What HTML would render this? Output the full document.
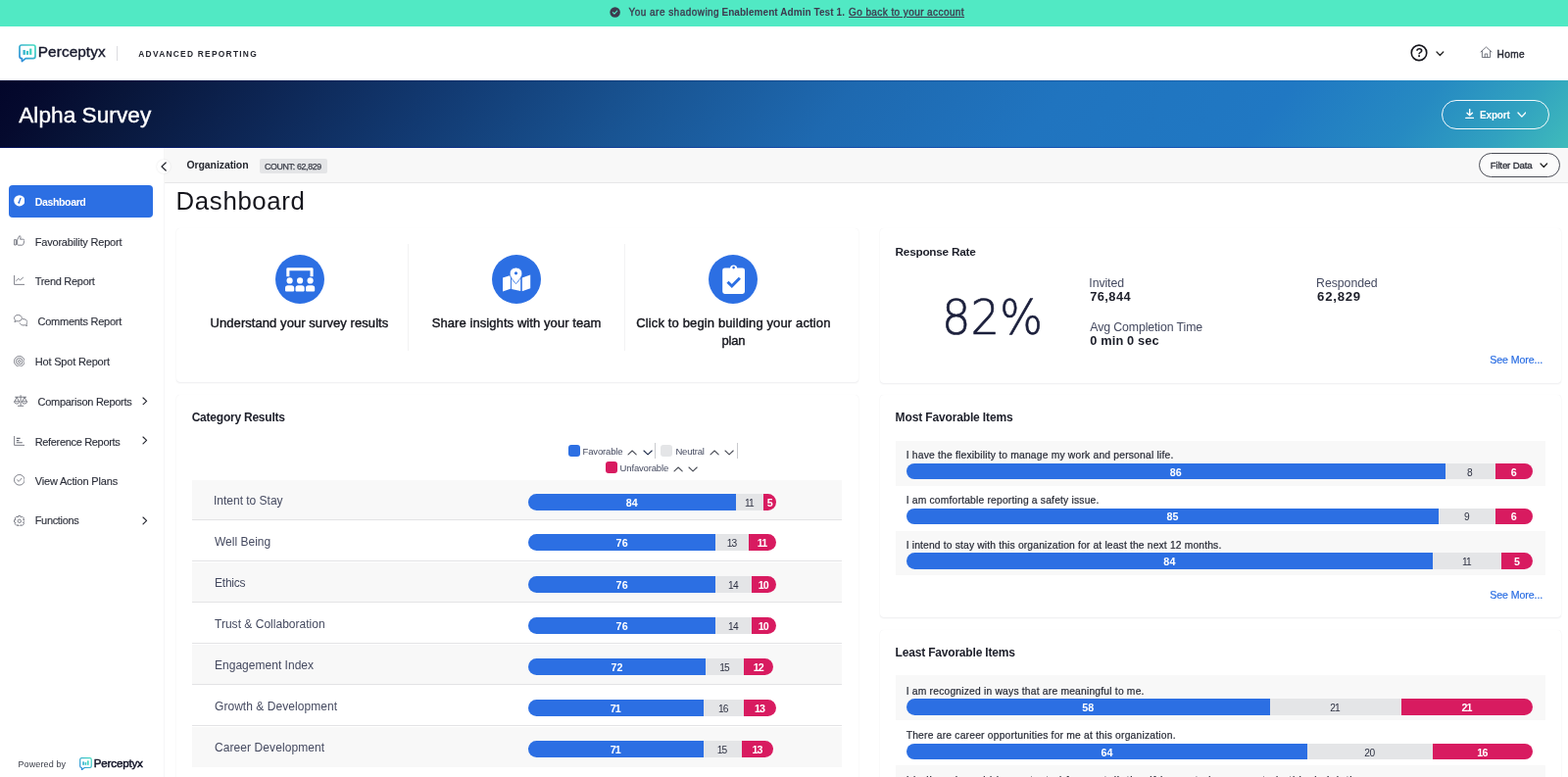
<!DOCTYPE html><html lang="en"><head><meta charset="utf-8"><title>Alpha Survey - Dashboard</title><style>
*{box-sizing:border-box;margin:0;padding:0}
html,body{width:1600px;height:793px;overflow:hidden;background:#fff}
body{position:relative;font-family:'Liberation Sans',Arial,sans-serif;color:#30343f;will-change:transform}
.a,.t,svg.i{position:absolute}
.t{white-space:pre;display:block;font-weight:400;margin:0}
a.t{text-decoration:underline}
.topbar{left:0;top:0;width:1600px;height:27px;background:#51e9c4}
.hdr{left:0;top:27px;width:1600px;height:55px;background:#fff}
.banner{left:0;top:82px;width:1600px;height:69px;background:linear-gradient(128deg,#03062a 0%,#050a2e 3%,#081539 8%,#0d2553 17%,#123a72 28%,#195594 41%,#1e69b0 53%,#2074bf 66%,#2078c3 80%,#268ac2 89%,#31a1c0 95%,#3fbbbb 100%);}
.bline{left:0;top:150px;width:1600px;height:1px;background:linear-gradient(90deg,rgba(0,25,150,.42) 0%,rgba(0,30,160,.4) 82%,rgba(0,30,160,0) 93%)}
.tline{left:0;top:82px;width:1600px;height:1px;background:linear-gradient(90deg,rgba(0,10,80,.3) 0%,rgba(0,10,80,.25) 70%,rgba(0,10,80,0) 90%)}
.side{left:0;top:151px;width:168px;height:642px;background:#fff;border-right:1px solid #f6f6f7}
.crumb{left:168px;top:151px;width:1432px;height:36px;background:#f8f8f8;border-bottom:1px solid #e7e7e8}
.card{background:#fff;border-radius:4px;box-shadow:0 1px 2px rgba(20,20,40,.07),0 0 1px rgba(20,20,40,.07)}
.pill{border-radius:999px}
.bar{display:flex;overflow:hidden;border-radius:999px}
.bar i{display:block;height:100%}
.row{background:#f8f8f8}
.ln{background:#e3e3e5;height:1px}
.vl{background:#f2f2f3;width:1px}
.navon{left:9px;top:189px;width:147px;height:33px;background:#2c6fe3;border-radius:4px}
.circ{width:50px;height:50px;border-radius:50%;background:#2c6fe3}
</style></head><body>
<header>
<div class="a topbar"></div>
<svg class="i" style="left:622px;top:7px" width="11" height="11" viewBox="0 0 11 11" fill="none" ><circle cx="5.6" cy="5.5" r="5.25" fill="#3d3a4e"/><path d="M3.4 5.7 L4.9 7.1 L7.7 4.1" stroke="#51e9c4" stroke-width="1.15" stroke-linecap="round" stroke-linejoin="round"/></svg>
<span class="t" style="left:641.6px;top:8.3px;font-size:10px;line-height:10px;color:#3d3a4e;letter-spacing:0.46px;-webkit-text-stroke:0.35px #3d3a4e;">You are shadowing</span>
<span class="t" style="left:736.4px;top:8.3px;font-size:10px;line-height:10px;font-weight:700;color:#3d3a4e;letter-spacing:0.07px;">Enablement Admin Test 1.</span>
<a class="t" style="left:866px;top:8.3px;font-size:10px;line-height:10px;color:#3d3a4e;letter-spacing:0.42px;text-decoration:underline;-webkit-text-stroke:0.35px #3d3a4e;">Go back to your account</a>
<div class="a hdr"></div>
<svg class="i" style="left:18.6px;top:45px" width="18.0" height="18.6" viewBox="0 0 18 18.6" fill="none" ><defs><linearGradient id="lga" x1="1" y1="0" x2="0" y2="1"><stop offset="0" stop-color="#45dcc0"/><stop offset="1" stop-color="#2a86db"/></linearGradient></defs><path d="M3 1 H15 A2 2 0 0 1 17 3 V12.6 A2 2 0 0 1 15 14.6 H7.2 L3.4 17.6 V14.6 H3 A2 2 0 0 1 1 12.6 V3 A2 2 0 0 1 3 1 Z" stroke="url(#lga)" stroke-width="1.7" stroke-linejoin="round"/><rect x="4.5" y="6" width="2.3" height="4.9" fill="#35b3cd"/><rect x="7.8" y="7" width="2.3" height="3.9" fill="#3cc3c8"/><rect x="11.1" y="4.6" width="2.3" height="6.3" fill="#44d6c2"/></svg>
<span class="t" style="left:38.8px;top:45.1px;font-size:15.4px;line-height:15.4px;color:#16182b;letter-spacing:0.05px;-webkit-text-stroke:0.35px #16182b;">Perceptyx</span>
<div class="a vl" style="left:118.5px;top:47px;width:1px;height:15px;background:#dcdcdf;"></div>
<span class="t" style="left:141.3px;top:51.0px;font-size:8.4px;line-height:8.4px;font-weight:700;color:#25272f;letter-spacing:1.26px;">ADVANCED REPORTING</span>
<svg class="i" style="left:1439px;top:45px" width="18" height="18" viewBox="0 0 18 18" fill="none" ><circle cx="9" cy="8.9" r="7.75" stroke="#16161d" stroke-width="1.6"/></svg>
<span class="t" style="left:1444.5px;top:48.3px;font-size:12.6px;line-height:12.6px;font-weight:700;color:#16161d;letter-spacing:0px;">?</span>
<svg class="i" style="left:1465.3px;top:52.15px" width="8.8" height="5.5" viewBox="-1 -1 8.8 5.5" fill="none" ><path d="M0 0 L3.4 3.5 L6.8 0" stroke="#222" stroke-width="1.25" stroke-linecap="round" stroke-linejoin="round"/></svg>
<svg class="i" style="left:1510.1px;top:47.3px" width="13" height="12.5" viewBox="0 0 13 12.5" fill="none" ><path d="M1 6 L6.5 1 L12 6 M2.4 5 V11.6 H10.6 V5 M5.2 11.6 V8 H7.8 V11.6" stroke="#62656f" stroke-width="0.9" stroke-linejoin="round" stroke-linecap="round"/></svg>
<span class="t" style="left:1527.6px;top:50.71px;font-size:10.1px;line-height:10.1px;color:#2a2c36;letter-spacing:0.36px;-webkit-text-stroke:0.4px #2a2c36;">Home</span>
</header>
<section>
<div class="a banner"></div>
<div class="a tline"></div>
<div class="a bline"></div>
<h1 class="t" style="left:19.2px;top:106.61px;font-size:22.6px;line-height:22.6px;color:#fff;letter-spacing:0.06px;-webkit-text-stroke:0.4px #fff;">Alpha Survey</h1>
<div class="a pill" style="left:1471px;top:101.7px;width:109.5px;height:30px;border:1.4px solid rgba(255,255,255,.95);"></div>
<svg class="i" style="left:1494.5px;top:111px" width="9.4" height="10.4" viewBox="0 0 9.4 10.4" fill="none" ><path d="M4.7 0.6 V6.6 M2 4.2 L4.7 6.8 L7.4 4.2 M0.8 9.5 H8.6" stroke="#fff" stroke-width="1.4" stroke-linecap="round" stroke-linejoin="round"/></svg>
<span class="t" style="left:1510px;top:112.71px;font-size:10px;line-height:10px;font-weight:700;color:#fff;letter-spacing:-0.17px;">Export</span>
<svg class="i" style="left:1547.6px;top:113.75px" width="9.8" height="6.1" viewBox="-1 -1 9.8 6.1" fill="none" ><path d="M0 0 L3.9 4.1 L7.8 0" stroke="#fff" stroke-width="1.35" stroke-linecap="round" stroke-linejoin="round"/></svg>
</section>
<nav>
<div class="a side"></div>
<div class="a navon"></div>
<svg class="i" style="left:13.5px;top:199.4px" width="11.6" height="11.6" viewBox="0 0 11.6 11.6" fill="none" ><circle cx="5.8" cy="5.8" r="5.6" fill="#fff"/><path d="M5.4 7.6 L7 3.3" stroke="#2c6fe3" stroke-width="1.3" stroke-linecap="round"/><circle cx="5.3" cy="7.7" r="1" fill="#2c6fe3"/></svg>
<span class="t" style="left:35.7px;top:201.01px;font-size:10.6px;line-height:10.6px;font-weight:700;color:#fff;letter-spacing:-0.4px;">Dashboard</span>
<svg class="i" style="left:13.5px;top:240.2px" width="11.5" height="11" viewBox="0 0 11.5 11" fill="none" ><path d="M0.6 4.6 H2.4 V10 H0.6 Z M3.6 9.6 V4.9 L5.7 0.8 C6.8 0.7 7.3 1.6 7 2.6 L6.6 4.2 H9.6 C10.6 4.2 11 5 10.8 5.8 L9.9 9.2 C9.7 9.9 9.2 10.2 8.6 10.2 H4.6 Z" stroke="#696c76" stroke-width="0.85" stroke-linejoin="round"/></svg>
<span class="t" style="left:35.7px;top:241.6px;font-size:11px;line-height:11px;color:#2b2e39;letter-spacing:-0.19px;-webkit-text-stroke:0.12px #2b2e39;">Favorability Report</span>
<svg class="i" style="left:13.5px;top:281.2px" width="11.6" height="10.2" viewBox="0 0 11.6 10.2" fill="none" ><path d="M0.6 0.4 V9.4 H11.2" stroke="#696c76" stroke-width="0.85" stroke-linecap="round" stroke-linejoin="round"/><path d="M2.6 5.6 L4.8 3.4 L6.6 4.8 L9.6 2.2" stroke="#696c76" stroke-width="0.85" stroke-linecap="round" stroke-linejoin="round"/></svg>
<span class="t" style="left:35.7px;top:282.21px;font-size:11px;line-height:11px;color:#2b2e39;letter-spacing:-0.29px;-webkit-text-stroke:0.12px #2b2e39;">Trend Report</span>
<svg class="i" style="left:13.5px;top:320.6px" width="14.6" height="12.4" viewBox="0 0 14.6 12.4" fill="none" ><path d="M4.4 0.5 C6.7 0.5 8.3 1.9 8.3 3.7 C8.3 5.5 6.7 6.9 4.4 6.9 C3.9 6.9 3.4 6.8 3 6.7 L0.9 7.6 L1.5 5.8 C0.9 5.2 0.5 4.5 0.5 3.7 C0.5 1.9 2.1 0.5 4.4 0.5 Z" stroke="#696c76" stroke-width="0.85" stroke-linejoin="round"/><path d="M9.3 4.6 C11.8 4.4 13.9 5.8 13.9 7.8 C13.9 8.6 13.5 9.3 12.9 9.9 L13.5 11.7 L11.4 10.8 C10.9 10.9 10.5 11 10 11 C8.2 11 6.7 10.1 6.2 8.8" stroke="#696c76" stroke-width="0.85" stroke-linejoin="round" stroke-linecap="round"/></svg>
<span class="t" style="left:38.5px;top:323.0px;font-size:11px;line-height:11px;color:#2b2e39;letter-spacing:-0.25px;-webkit-text-stroke:0.12px #2b2e39;">Comments Report</span>
<svg class="i" style="left:13.5px;top:362.5px" width="11.6" height="11.6" viewBox="0 0 11.6 11.6" fill="none" ><circle cx="5.8" cy="5.8" r="5.3" stroke="#696c76" stroke-width="0.85"/><circle cx="5.8" cy="5.8" r="3.3" stroke="#696c76" stroke-width="0.85"/><circle cx="5.8" cy="5.8" r="1.3" stroke="#696c76" stroke-width="0.85"/></svg>
<span class="t" style="left:35.7px;top:364.3px;font-size:11px;line-height:11px;color:#2b2e39;letter-spacing:-0.18px;-webkit-text-stroke:0.12px #2b2e39;">Hot Spot Report</span>
<svg class="i" style="left:13.5px;top:403px" width="14.2" height="12" viewBox="0 0 14.2 12" fill="none" ><path d="M7.1 0.6 V10.8 M4.4 11.3 H9.8 M1.6 2.2 H12.6 M3.2 2.4 L0.9 6.8 M3.2 2.4 L5.5 6.8 M11 2.4 L8.7 6.8 M11 2.4 L13.3 6.8" stroke="#696c76" stroke-width="0.85" stroke-linecap="round"/><path d="M0.6 6.8 H5.8 C5.8 8.3 4.6 9 3.2 9 C1.8 9 0.6 8.3 0.6 6.8 Z M8.4 6.8 H13.6 C13.6 8.3 12.4 9 11 9 C9.6 9 8.4 8.3 8.4 6.8 Z" stroke="#696c76" stroke-width="0.85" stroke-linejoin="round"/></svg>
<span class="t" style="left:38.5px;top:405.0px;font-size:11px;line-height:11px;color:#2b2e39;letter-spacing:-0.27px;-webkit-text-stroke:0.12px #2b2e39;">Comparison Reports</span>
<svg class="i" style="left:145.3px;top:404.5px" width="5.6" height="8.8" viewBox="-1 -1 5.6 8.8" fill="none" ><path d="M0 0 L3.6 3.4 L0 6.8" stroke="#23252e" stroke-width="1.15" stroke-linecap="round" stroke-linejoin="round"/></svg>
<svg class="i" style="left:13.5px;top:444.6px" width="11.6" height="10.2" viewBox="0 0 11.6 10.2" fill="none" ><path d="M0.6 0.4 V9.4 H11.2" stroke="#696c76" stroke-width="0.85" stroke-linecap="round" stroke-linejoin="round"/><path d="M2.8 2.4 H6.6 M2.8 4.6 H5.4 M2.8 6.8 H8.8" stroke="#696c76" stroke-width="1.1"/></svg>
<span class="t" style="left:35.7px;top:445.6px;font-size:11px;line-height:11px;color:#2b2e39;letter-spacing:-0.33px;-webkit-text-stroke:0.12px #2b2e39;">Reference Reports</span>
<svg class="i" style="left:145.3px;top:445.1px" width="5.6" height="8.8" viewBox="-1 -1 5.6 8.8" fill="none" ><path d="M0 0 L3.6 3.4 L0 6.8" stroke="#23252e" stroke-width="1.15" stroke-linecap="round" stroke-linejoin="round"/></svg>
<svg class="i" style="left:13.5px;top:484.4px" width="11.6" height="11.6" viewBox="0 0 11.6 11.6" fill="none" ><circle cx="5.8" cy="5.8" r="5.3" stroke="#696c76" stroke-width="0.85"/><path d="M3.6 5.9 L5.2 7.4 L8 4.3" stroke="#696c76" stroke-width="0.85" stroke-linecap="round" stroke-linejoin="round"/></svg>
<span class="t" style="left:35.7px;top:486.0px;font-size:11px;line-height:11px;color:#2b2e39;letter-spacing:-0.17px;-webkit-text-stroke:0.12px #2b2e39;">View Action Plans</span>
<svg class="i" style="left:13.5px;top:525.8px" width="11.6" height="11.6" viewBox="0 0 11.6 11.6" fill="none" ><g transform="translate(5.8 5.8)"><path d="M-1.1 -5.3 H1.1 L1.5 -3.8 L2.9 -4.6 L4.6 -2.9 L3.8 -1.5 L5.3 -1.1 V1.1 L3.8 1.5 L4.6 2.9 L2.9 4.6 L1.5 3.8 L1.1 5.3 H-1.1 L-1.5 3.8 L-2.9 4.6 L-4.6 2.9 L-3.8 1.5 L-5.3 1.1 V-1.1 L-3.8 -1.5 L-4.6 -2.9 L-2.9 -4.6 L-1.5 -3.8 Z" stroke="#696c76" stroke-width="0.85" stroke-linejoin="round"/><circle r="1.7" stroke="#696c76" stroke-width="0.85"/></g></svg>
<span class="t" style="left:35.7px;top:526.4px;font-size:11px;line-height:11px;color:#2b2e39;letter-spacing:-0.32px;-webkit-text-stroke:0.12px #2b2e39;">Functions</span>
<svg class="i" style="left:145.3px;top:526.9px" width="5.6" height="8.8" viewBox="-1 -1 5.6 8.8" fill="none" ><path d="M0 0 L3.6 3.4 L0 6.8" stroke="#23252e" stroke-width="1.15" stroke-linecap="round" stroke-linejoin="round"/></svg>
<span class="t" style="left:18.5px;top:775.6px;font-size:9px;line-height:9px;color:#3a3d48;letter-spacing:0.12px;">Powered by</span>
<svg class="i" style="left:81.2px;top:773px" width="12.96" height="13.39" viewBox="0 0 18 18.6" fill="none" ><defs><linearGradient id="lgb" x1="1" y1="0" x2="0" y2="1"><stop offset="0" stop-color="#45dcc0"/><stop offset="1" stop-color="#2a86db"/></linearGradient></defs><path d="M3 1 H15 A2 2 0 0 1 17 3 V12.6 A2 2 0 0 1 15 14.6 H7.2 L3.4 17.6 V14.6 H3 A2 2 0 0 1 1 12.6 V3 A2 2 0 0 1 3 1 Z" stroke="url(#lgb)" stroke-width="1.7" stroke-linejoin="round"/><rect x="4.5" y="6" width="2.3" height="4.9" fill="#35b3cd"/><rect x="7.8" y="7" width="2.3" height="3.9" fill="#3cc3c8"/><rect x="11.1" y="4.6" width="2.3" height="6.3" fill="#44d6c2"/></svg>
<span class="t" style="left:95.8px;top:773.4px;font-size:11.6px;line-height:11.6px;color:#16182b;letter-spacing:-0.19px;-webkit-text-stroke:0.5px #16182b;">Perceptyx</span>
</nav>
<main>
<div class="a crumb"></div>
<div class="a " style="left:160px;top:162.5px;width:14px;height:14px;background:#fff;border-radius:50%;box-shadow:0 0 2px rgba(0,0,0,.12);"></div>
<svg class="i" style="left:163.5px;top:164.6px" width="6.2" height="10" viewBox="-1 -1 6.2 10" fill="none" ><path d="M4.2 0 L0 4.0 L4.2 8" stroke="#23252e" stroke-width="1.2" stroke-linecap="round" stroke-linejoin="round"/></svg>
<span class="t" style="left:190.5px;top:163.0px;font-size:10.5px;line-height:10.5px;font-weight:700;color:#25272f;letter-spacing:-0.1px;">Organization</span>
<div class="a " style="left:265px;top:162px;width:69px;height:15px;background:#e4e5e7;border-radius:2px;"></div>
<span class="t" style="left:270px;top:165.51px;font-size:8.8px;line-height:8.8px;color:#3a3d48;letter-spacing:-0.32px;-webkit-text-stroke:0.25px #3a3d48;">COUNT: 62,829</span>
<div class="a pill" style="left:1508.5px;top:156px;width:83.5px;height:25px;border:1px solid #4a4c55;background:#fbfbfb;"></div>
<span class="t" style="left:1520.7px;top:164.11px;font-size:9.7px;line-height:9.7px;color:#2a2c36;letter-spacing:-0.18px;-webkit-text-stroke:0.3px #2a2c36;">Filter Data</span>
<svg class="i" style="left:1571.1px;top:166.35px" width="8.6" height="5.5" viewBox="-1 -1 8.6 5.5" fill="none" ><path d="M0 0 L3.3 3.5 L6.6 0" stroke="#222" stroke-width="1.2" stroke-linecap="round" stroke-linejoin="round"/></svg>
<h2 class="t" style="left:179.6px;top:193.01px;font-size:25.8px;line-height:25.8px;color:#16161d;letter-spacing:0.64px;">Dashboard</h2>
<section>
<div class="a card" style="left:180px;top:233px;width:695.5px;height:156.5px;"></div>
<div class="a vl" style="left:416px;top:249px;width:1px;height:108.5px;"></div>
<div class="a vl" style="left:637px;top:249px;width:1px;height:108.5px;"></div>
<div class="a circ" style="left:280.6px;top:260px;"></div>
<div class="a circ" style="left:501.7px;top:260px;"></div>
<div class="a circ" style="left:723.3px;top:260px;"></div>
<svg class="i" style="left:290px;top:271px" width="32" height="28" viewBox="0 0 32 28" fill="none" ><path d="M2.3 11.2 V3.6 A1.4 1.4 0 0 1 3.7 2.2 H28.2 A1.4 1.4 0 0 1 29.6 3.6 V11.2 H26.5 V5.3 H5.4 V11.2 Z" fill="#fff"/><circle cx="5.6" cy="15.4" r="3.1" fill="#fff"/><circle cx="16.1" cy="15.4" r="3.1" fill="#fff"/><circle cx="26.6" cy="15.4" r="3.1" fill="#fff"/><path d="M1 25.6 V23 A2.8 2.8 0 0 1 3.8 20.2 H7.4 A2.8 2.8 0 0 1 10.2 23 V25.6 A0.8 0.8 0 0 1 9.4 26.4 H1.8 A0.8 0.8 0 0 1 1 25.6 Z M11.5 25.6 V23 A2.8 2.8 0 0 1 14.3 20.2 H17.9 A2.8 2.8 0 0 1 20.7 23 V25.6 A0.8 0.8 0 0 1 19.9 26.4 H12.3 A0.8 0.8 0 0 1 11.5 25.6 Z M22 25.6 V23 A2.8 2.8 0 0 1 24.8 20.2 H28.4 A2.8 2.8 0 0 1 31.2 23 V25.6 A0.8 0.8 0 0 1 30.4 26.4 H22.8 A0.8 0.8 0 0 1 22 25.6 Z" fill="#fff"/></svg>
<svg class="i" style="left:512px;top:272px" width="30" height="27" viewBox="0 0 30 27" fill="none" ><path d="M1 11.6 L8.9 8.9 V22.8 L1 25.5 Z M20.8 11.4 L29.2 8.4 V22.2 L20.8 25.2 Z" fill="#fff"/><path d="M9.9 10 L14.2 16.6 L14.9 16.6 L19.2 10 V25 L9.9 22.9 Z" fill="#fff"/><path d="M14.5 1.1 C18.3 1.1 20.9 3.9 20.9 7.1 C20.9 10.4 17.5 14.2 14.5 17.6 C11.5 14.2 8.1 10.4 8.1 7.1 C8.1 3.9 10.7 1.1 14.5 1.1 Z" fill="#fff" stroke="#2c6fe3" stroke-width="0.9"/><circle cx="14.5" cy="6.8" r="1.6" fill="#2c6fe3"/></svg>
<svg class="i" style="left:736px;top:268px" width="25" height="33" viewBox="0 0 25 33" fill="none" ><path d="M3.6 5.4 H9 A3.7 3.7 0 0 1 16.2 5.4 H21.6 A2.4 2.4 0 0 1 24 7.8 V29.6 A2.4 2.4 0 0 1 21.6 32 H3.6 A2.4 2.4 0 0 1 1.2 29.6 V7.8 A2.4 2.4 0 0 1 3.6 5.4 Z" fill="#fff"/><circle cx="12.6" cy="5.1" r="1.3" fill="#2c6fe3"/><path d="M6.5 19.8 L10.8 24 L18.9 15.8" stroke="#2c6fe3" stroke-width="3" stroke-linejoin="miter"/></svg>
<span class="t" style="left:214.6px;top:323.3px;font-size:13px;line-height:13px;color:#15161d;letter-spacing:0.06px;-webkit-text-stroke:0.4px #15161d;">Understand your survey results</span>
<span class="t" style="left:440.7px;top:323.3px;font-size:13px;line-height:13px;color:#15161d;letter-spacing:0.08px;-webkit-text-stroke:0.4px #15161d;">Share insights with your team</span>
<span class="t" style="left:649.3px;top:323.3px;font-size:13px;line-height:13px;color:#15161d;letter-spacing:0.13px;-webkit-text-stroke:0.4px #15161d;">Click to begin building your action</span>
<span class="t" style="left:736.5px;top:340.6px;font-size:13px;line-height:13px;color:#15161d;letter-spacing:-0.18px;-webkit-text-stroke:0.4px #15161d;">plan</span>
</section>
<section>
<div class="a card" style="left:180px;top:402.5px;width:695.5px;height:400px;"></div>
<h3 class="t" style="left:195.7px;top:419.6px;font-size:12px;line-height:12px;font-weight:700;color:#1d1f2a;letter-spacing:-0.23px;">Category Results</h3>
<div class="a " style="left:580.2px;top:454.3px;width:12px;height:11.8px;background:#2c6fe3;border-radius:3px;"></div>
<span class="t" style="left:594.6px;top:456.21px;font-size:9.5px;line-height:9.5px;color:#454a60;letter-spacing:-0.17px;">Favorable</span>
<svg class="i" style="left:640.4px;top:458.65px" width="10.2" height="5.9" viewBox="-1 -1 10.2 5.9" fill="none" ><path d="M0 3.9 L4.1 0 L8.2 3.9" stroke="#4a4d57" stroke-width="1.1" stroke-linecap="round" stroke-linejoin="round"/></svg>
<svg class="i" style="left:655.9px;top:458.95px" width="10.2" height="5.9" viewBox="-1 -1 10.2 5.9" fill="none" ><path d="M0 0 L4.1 3.9 L8.2 0" stroke="#1d2a4a" stroke-width="1.1" stroke-linecap="round" stroke-linejoin="round"/></svg>
<div class="a vl" style="left:668.2px;top:452.4px;width:1px;height:16px;background:#c9cace;"></div>
<div class="a " style="left:674.1px;top:454.3px;width:12px;height:11.8px;background:#e4e5e7;border-radius:3px;"></div>
<span class="t" style="left:689.4px;top:456.21px;font-size:9.5px;line-height:9.5px;color:#454a60;letter-spacing:-0.19px;">Neutral</span>
<svg class="i" style="left:724.0px;top:458.65px" width="10.2" height="5.9" viewBox="-1 -1 10.2 5.9" fill="none" ><path d="M0 3.9 L4.1 0 L8.2 3.9" stroke="#4a4d57" stroke-width="1.1" stroke-linecap="round" stroke-linejoin="round"/></svg>
<svg class="i" style="left:739.4px;top:458.95px" width="10.2" height="5.9" viewBox="-1 -1 10.2 5.9" fill="none" ><path d="M0 0 L4.1 3.9 L8.2 0" stroke="#4a4d57" stroke-width="1.1" stroke-linecap="round" stroke-linejoin="round"/></svg>
<div class="a vl" style="left:752.2px;top:452.4px;width:1px;height:16px;background:#c9cace;"></div>
<div class="a " style="left:617.6px;top:471.1px;width:12.3px;height:12.3px;background:#d81b60;border-radius:3px;"></div>
<span class="t" style="left:632.6px;top:473.4px;font-size:9.5px;line-height:9.5px;color:#454a60;letter-spacing:-0.16px;">Unfavorable</span>
<svg class="i" style="left:687.3px;top:475.95px" width="10.2" height="5.9" viewBox="-1 -1 10.2 5.9" fill="none" ><path d="M0 3.9 L4.1 0 L8.2 3.9" stroke="#4a4d57" stroke-width="1.1" stroke-linecap="round" stroke-linejoin="round"/></svg>
<svg class="i" style="left:702.3px;top:476.35px" width="10.2" height="5.9" viewBox="-1 -1 10.2 5.9" fill="none" ><path d="M0 0 L4.1 3.9 L8.2 0" stroke="#4a4d57" stroke-width="1.1" stroke-linecap="round" stroke-linejoin="round"/></svg>
<div class="a row" style="left:196.2px;top:489.7px;width:663px;height:41px;"></div>
<div class="a ln" style="left:196.2px;top:530.3px;width:663px;height:1px;"></div>
<span class="t" style="left:218px;top:505.21px;font-size:12px;line-height:12px;color:#454a60;letter-spacing:-0.01px;">Intent to Stay</span>
<div class="a bar" style="left:539px;top:503.8px;width:253.0px;height:17px;"><i style="width:211.52px;background:#2c6fe3"></i><i style="width:28.83px;background:#e4e5e7"></i><i style="width:12.65px;background:#d81b60"></i></div><span class="t" style="left:638.71px;top:507.81px;font-size:10.7px;line-height:10.7px;font-weight:700;color:#fff;letter-spacing:0.16px;">84</span><span class="t" style="left:759.93px;top:508.81px;font-size:10.2px;line-height:10.2px;color:#2d3142;letter-spacing:-0.9px;">11</span><span class="t" style="left:782.68px;top:507.81px;font-size:10.7px;line-height:10.7px;font-weight:700;color:#fff;letter-spacing:0.0px;">5</span>
<div class="a " style="left:196.2px;top:531.7px;width:663px;height:41px;background:#fff;"></div>
<div class="a ln" style="left:196.2px;top:572.3px;width:663px;height:1px;"></div>
<span class="t" style="left:219px;top:547.21px;font-size:12px;line-height:12px;color:#454a60;letter-spacing:0.01px;">Well Being</span>
<div class="a bar" style="left:539px;top:545.4px;width:253.0px;height:17px;"><i style="width:191.28px;background:#2c6fe3"></i><i style="width:33.89px;background:#e4e5e7"></i><i style="width:27.83px;background:#d81b60"></i></div><span class="t" style="left:628.59px;top:549.41px;font-size:10.7px;line-height:10.7px;font-weight:700;color:#fff;letter-spacing:0.16px;">76</span><span class="t" style="left:741.84px;top:550.41px;font-size:10.2px;line-height:10.2px;color:#2d3142;letter-spacing:-0.9px;">13</span><span class="t" style="left:772.86px;top:549.41px;font-size:10.7px;line-height:10.7px;font-weight:700;color:#fff;letter-spacing:-0.9px;">11</span>
<div class="a row" style="left:196.2px;top:573.7px;width:663px;height:41px;"></div>
<div class="a ln" style="left:196.2px;top:614.3px;width:663px;height:1px;"></div>
<span class="t" style="left:219px;top:589.21px;font-size:12px;line-height:12px;color:#454a60;letter-spacing:-0.22px;">Ethics</span>
<div class="a bar" style="left:539px;top:587.8px;width:253.0px;height:17px;"><i style="width:191.28px;background:#2c6fe3"></i><i style="width:36.42px;background:#e4e5e7"></i><i style="width:25.3px;background:#d81b60"></i></div><span class="t" style="left:628.59px;top:591.81px;font-size:10.7px;line-height:10.7px;font-weight:700;color:#fff;letter-spacing:0.16px;">76</span><span class="t" style="left:743.11px;top:592.81px;font-size:10.2px;line-height:10.2px;color:#2d3142;letter-spacing:-0.9px;">14</span><span class="t" style="left:773.83px;top:591.81px;font-size:10.7px;line-height:10.7px;font-weight:700;color:#fff;letter-spacing:-0.9px;">10</span>
<div class="a " style="left:196.2px;top:615.7px;width:663px;height:41px;background:#fff;"></div>
<div class="a ln" style="left:196.2px;top:656.3px;width:663px;height:1px;"></div>
<span class="t" style="left:219px;top:631.21px;font-size:12px;line-height:12px;color:#454a60;letter-spacing:0.02px;">Trust &amp; Collaboration</span>
<div class="a bar" style="left:539px;top:629.8px;width:253.0px;height:17px;"><i style="width:191.28px;background:#2c6fe3"></i><i style="width:36.42px;background:#e4e5e7"></i><i style="width:25.3px;background:#d81b60"></i></div><span class="t" style="left:628.59px;top:633.81px;font-size:10.7px;line-height:10.7px;font-weight:700;color:#fff;letter-spacing:0.16px;">76</span><span class="t" style="left:743.11px;top:634.81px;font-size:10.2px;line-height:10.2px;color:#2d3142;letter-spacing:-0.9px;">14</span><span class="t" style="left:773.83px;top:633.81px;font-size:10.7px;line-height:10.7px;font-weight:700;color:#fff;letter-spacing:-0.9px;">10</span>
<div class="a row" style="left:196.2px;top:657.7px;width:663px;height:41px;"></div>
<div class="a ln" style="left:196.2px;top:698.3px;width:663px;height:1px;"></div>
<span class="t" style="left:219px;top:673.21px;font-size:12px;line-height:12px;color:#454a60;letter-spacing:0.02px;">Engagement Index</span>
<div class="a bar" style="left:539px;top:671.8px;width:250.47px;height:17px;"><i style="width:181.16px;background:#2c6fe3"></i><i style="width:38.95px;background:#e4e5e7"></i><i style="width:30.36px;background:#d81b60"></i></div><span class="t" style="left:623.53px;top:675.81px;font-size:10.7px;line-height:10.7px;font-weight:700;color:#fff;letter-spacing:0.16px;">72</span><span class="t" style="left:734.25px;top:676.81px;font-size:10.2px;line-height:10.2px;color:#2d3142;letter-spacing:-0.9px;">15</span><span class="t" style="left:768.77px;top:675.81px;font-size:10.7px;line-height:10.7px;font-weight:700;color:#fff;letter-spacing:-0.9px;">12</span>
<div class="a " style="left:196.2px;top:699.7px;width:663px;height:41px;background:#fff;"></div>
<div class="a ln" style="left:196.2px;top:740.3px;width:663px;height:1px;"></div>
<span class="t" style="left:219px;top:715.21px;font-size:12px;line-height:12px;color:#454a60;letter-spacing:0.05px;">Growth &amp; Development</span>
<div class="a bar" style="left:539px;top:713.8px;width:253.0px;height:17px;"><i style="width:178.63px;background:#2c6fe3"></i><i style="width:41.48px;background:#e4e5e7"></i><i style="width:32.89px;background:#d81b60"></i></div><span class="t" style="left:622.79px;top:717.81px;font-size:10.7px;line-height:10.7px;font-weight:700;color:#fff;letter-spacing:-0.9px;">71</span><span class="t" style="left:732.99px;top:718.81px;font-size:10.2px;line-height:10.2px;color:#2d3142;letter-spacing:-0.9px;">16</span><span class="t" style="left:770.03px;top:717.81px;font-size:10.7px;line-height:10.7px;font-weight:700;color:#fff;letter-spacing:-0.9px;">13</span>
<div class="a row" style="left:196.2px;top:741.7px;width:663px;height:41px;"></div>
<span class="t" style="left:219px;top:757.21px;font-size:12px;line-height:12px;color:#454a60;letter-spacing:0.08px;">Career Development</span>
<div class="a bar" style="left:539px;top:755.8px;width:250.47px;height:17px;"><i style="width:178.63px;background:#2c6fe3"></i><i style="width:38.95px;background:#e4e5e7"></i><i style="width:32.89px;background:#d81b60"></i></div><span class="t" style="left:622.79px;top:759.81px;font-size:10.7px;line-height:10.7px;font-weight:700;color:#fff;letter-spacing:-0.9px;">71</span><span class="t" style="left:731.72px;top:760.81px;font-size:10.2px;line-height:10.2px;color:#2d3142;letter-spacing:-0.9px;">15</span><span class="t" style="left:767.5px;top:759.81px;font-size:10.7px;line-height:10.7px;font-weight:700;color:#fff;letter-spacing:-0.9px;">13</span>
</section>
<section>
<div class="a card" style="left:897.5px;top:233px;width:695px;height:157.5px;"></div>
<h3 class="t" style="left:913.6px;top:252.01px;font-size:11.8px;line-height:11.8px;font-weight:700;color:#1d1f2a;letter-spacing:-0.26px;">Response Rate</h3>
<span class="t" style="left:961.23px;top:298.71px;font-size:50.6px;line-height:50.6px;font-weight:200;font-family:'DejaVu Sans', 'Liberation Sans', sans-serif;color:#1b1f3b;transform-origin:0 0;transform:scaleX(0.9167);-webkit-text-stroke:0.7px #1b1f3b;">82%</span>
<span class="t" style="left:1111.3px;top:283.21px;font-size:12.3px;line-height:12.3px;color:#454a60;letter-spacing:-0.08px;">Invited</span>
<span class="t" style="left:1112.3px;top:297.21px;font-size:12.8px;line-height:12.8px;font-weight:700;color:#1d1f2a;letter-spacing:0.42px;">76,844</span>
<span class="t" style="left:1112.3px;top:328.01px;font-size:12.3px;line-height:12.3px;color:#454a60;letter-spacing:-0.1px;">Avg Completion Time</span>
<span class="t" style="left:1112.3px;top:342.21px;font-size:12.8px;line-height:12.8px;font-weight:700;color:#1d1f2a;letter-spacing:0.13px;">0 min 0 sec</span>
<span class="t" style="left:1343.1px;top:283.21px;font-size:12.3px;line-height:12.3px;color:#454a60;letter-spacing:-0.05px;">Responded</span>
<span class="t" style="left:1344.1px;top:296.21px;font-size:13.2px;line-height:13.2px;font-weight:700;color:#1d1f2a;letter-spacing:0.74px;">62,829</span>
<span class="t" style="left:1520.2px;top:361.71px;font-size:10.6px;line-height:10.6px;color:#2c6fe3;letter-spacing:-0.07px;-webkit-text-stroke:0.2px #2c6fe3;">See More...</span>
</section>
<section>
<div class="a card" style="left:897.5px;top:403px;width:695px;height:227px;"></div>
<h3 class="t" style="left:913.6px;top:420.3px;font-size:12px;line-height:12px;font-weight:700;color:#1d1f2a;letter-spacing:-0.14px;">Most Favorable Items</h3>
<div class="a row" style="left:913.6px;top:450.1px;width:663.5px;height:45.8px;"></div>
<span class="t" style="left:924.7px;top:460.1px;font-size:10.3px;line-height:10.3px;color:#262935;letter-spacing:0.2px;-webkit-text-stroke:0.2px #262935;">I have the flexibility to manage my work and personal life.</span>
<div class="a bar" style="left:925px;top:472.8px;width:639.0px;height:16.5px;"><i style="width:549.54px;background:#2c6fe3"></i><i style="width:51.12px;background:#e4e5e7"></i><i style="width:38.34px;background:#d81b60"></i></div><span class="t" style="left:1193.72px;top:476.51px;font-size:10.7px;line-height:10.7px;font-weight:700;color:#fff;letter-spacing:0.16px;">86</span><span class="t" style="left:1497.1px;top:477.51px;font-size:10.2px;line-height:10.2px;color:#2d3142;letter-spacing:-0.5px;">8</span><span class="t" style="left:1541.83px;top:476.51px;font-size:10.7px;line-height:10.7px;font-weight:700;color:#fff;letter-spacing:0.0px;">6</span>
<span class="t" style="left:924.7px;top:505.91px;font-size:10.3px;line-height:10.3px;color:#262935;letter-spacing:0.19px;-webkit-text-stroke:0.2px #262935;">I am comfortable reporting a safety issue.</span>
<div class="a bar" style="left:925px;top:518.6px;width:639.0px;height:16.5px;"><i style="width:543.15px;background:#2c6fe3"></i><i style="width:57.51px;background:#e4e5e7"></i><i style="width:38.34px;background:#d81b60"></i></div><span class="t" style="left:1190.52px;top:522.31px;font-size:10.7px;line-height:10.7px;font-weight:700;color:#fff;letter-spacing:0.16px;">85</span><span class="t" style="left:1493.91px;top:523.31px;font-size:10.2px;line-height:10.2px;color:#2d3142;letter-spacing:-0.5px;">9</span><span class="t" style="left:1541.83px;top:522.31px;font-size:10.7px;line-height:10.7px;font-weight:700;color:#fff;letter-spacing:0.0px;">6</span>
<div class="a row" style="left:913.6px;top:541.7px;width:663.5px;height:45.8px;"></div>
<span class="t" style="left:924.7px;top:551.71px;font-size:10.3px;line-height:10.3px;color:#262935;letter-spacing:0.16px;-webkit-text-stroke:0.2px #262935;">I intend to stay with this organization for at least the next 12 months.</span>
<div class="a bar" style="left:925px;top:564.4px;width:639.0px;height:16.5px;"><i style="width:536.76px;background:#2c6fe3"></i><i style="width:70.29px;background:#e4e5e7"></i><i style="width:31.95px;background:#d81b60"></i></div><span class="t" style="left:1187.33px;top:568.11px;font-size:10.7px;line-height:10.7px;font-weight:700;color:#fff;letter-spacing:0.16px;">84</span><span class="t" style="left:1491.9px;top:569.11px;font-size:10.2px;line-height:10.2px;color:#2d3142;letter-spacing:-0.9px;">11</span><span class="t" style="left:1545.02px;top:568.11px;font-size:10.7px;line-height:10.7px;font-weight:700;color:#fff;letter-spacing:0.0px;">5</span>
<span class="t" style="left:1520.2px;top:602.4px;font-size:10.6px;line-height:10.6px;color:#2c6fe3;letter-spacing:-0.07px;-webkit-text-stroke:0.2px #2c6fe3;">See More...</span>
</section>
<section>
<div class="a card" style="left:897.5px;top:642.5px;width:695px;height:200px;"></div>
<h3 class="t" style="left:913.6px;top:660.4px;font-size:12px;line-height:12px;font-weight:700;color:#1d1f2a;letter-spacing:-0.19px;">Least Favorable Items</h3>
<div class="a row" style="left:913.6px;top:689.3px;width:663.5px;height:45.8px;"></div>
<span class="t" style="left:924.7px;top:700.6px;font-size:10.3px;line-height:10.3px;color:#262935;letter-spacing:0.2px;-webkit-text-stroke:0.2px #262935;">I am recognized in ways that are meaningful to me.</span>
<div class="a bar" style="left:925px;top:713.1px;width:639.0px;height:16.5px;"><i style="width:370.62px;background:#2c6fe3"></i><i style="width:134.19px;background:#e4e5e7"></i><i style="width:134.19px;background:#d81b60"></i></div><span class="t" style="left:1104.26px;top:716.81px;font-size:10.7px;line-height:10.7px;font-weight:700;color:#fff;letter-spacing:0.16px;">58</span><span class="t" style="left:1357.33px;top:717.81px;font-size:10.2px;line-height:10.2px;color:#2d3142;letter-spacing:-0.9px;">21</span><span class="t" style="left:1491.38px;top:716.81px;font-size:10.7px;line-height:10.7px;font-weight:700;color:#fff;letter-spacing:-0.9px;">21</span>
<span class="t" style="left:924.7px;top:746.41px;font-size:10.3px;line-height:10.3px;color:#262935;letter-spacing:0.21px;-webkit-text-stroke:0.2px #262935;">There are career opportunities for me at this organization.</span>
<div class="a bar" style="left:925px;top:758.9px;width:639.0px;height:16.5px;"><i style="width:408.96px;background:#2c6fe3"></i><i style="width:127.8px;background:#e4e5e7"></i><i style="width:102.24px;background:#d81b60"></i></div><span class="t" style="left:1123.43px;top:762.61px;font-size:10.7px;line-height:10.7px;font-weight:700;color:#fff;letter-spacing:0.16px;">64</span><span class="t" style="left:1392.31px;top:763.61px;font-size:10.2px;line-height:10.2px;color:#2d3142;letter-spacing:-0.57px;">20</span><span class="t" style="left:1507.36px;top:762.61px;font-size:10.7px;line-height:10.7px;font-weight:700;color:#fff;letter-spacing:-0.9px;">16</span>
<div class="a row" style="left:913.6px;top:780.9px;width:663.5px;height:45.8px;"></div>
<span class="t" style="left:924.7px;top:792.21px;font-size:10.3px;line-height:10.3px;color:#262935;letter-spacing:0.85px;-webkit-text-stroke:0.2px #262935;">I believe I would be protected from retaliation if I reported a suspected ethical violation.</span>
<div class="a bar" style="left:925px;top:804.7px;width:639.0px;height:16.5px;"><i style="width:383.4px;background:#2c6fe3"></i><i style="width:140.58px;background:#e4e5e7"></i><i style="width:115.02px;background:#d81b60"></i></div><span class="t" style="left:1110.65px;top:808.41px;font-size:10.7px;line-height:10.7px;font-weight:700;color:#fff;letter-spacing:0.16px;">60</span><span class="t" style="left:1373.14px;top:809.41px;font-size:10.2px;line-height:10.2px;color:#2d3142;letter-spacing:-0.57px;">22</span><span class="t" style="left:1500.97px;top:808.41px;font-size:10.7px;line-height:10.7px;font-weight:700;color:#fff;letter-spacing:-0.9px;">18</span>
</section>
</main>
</body></html>
